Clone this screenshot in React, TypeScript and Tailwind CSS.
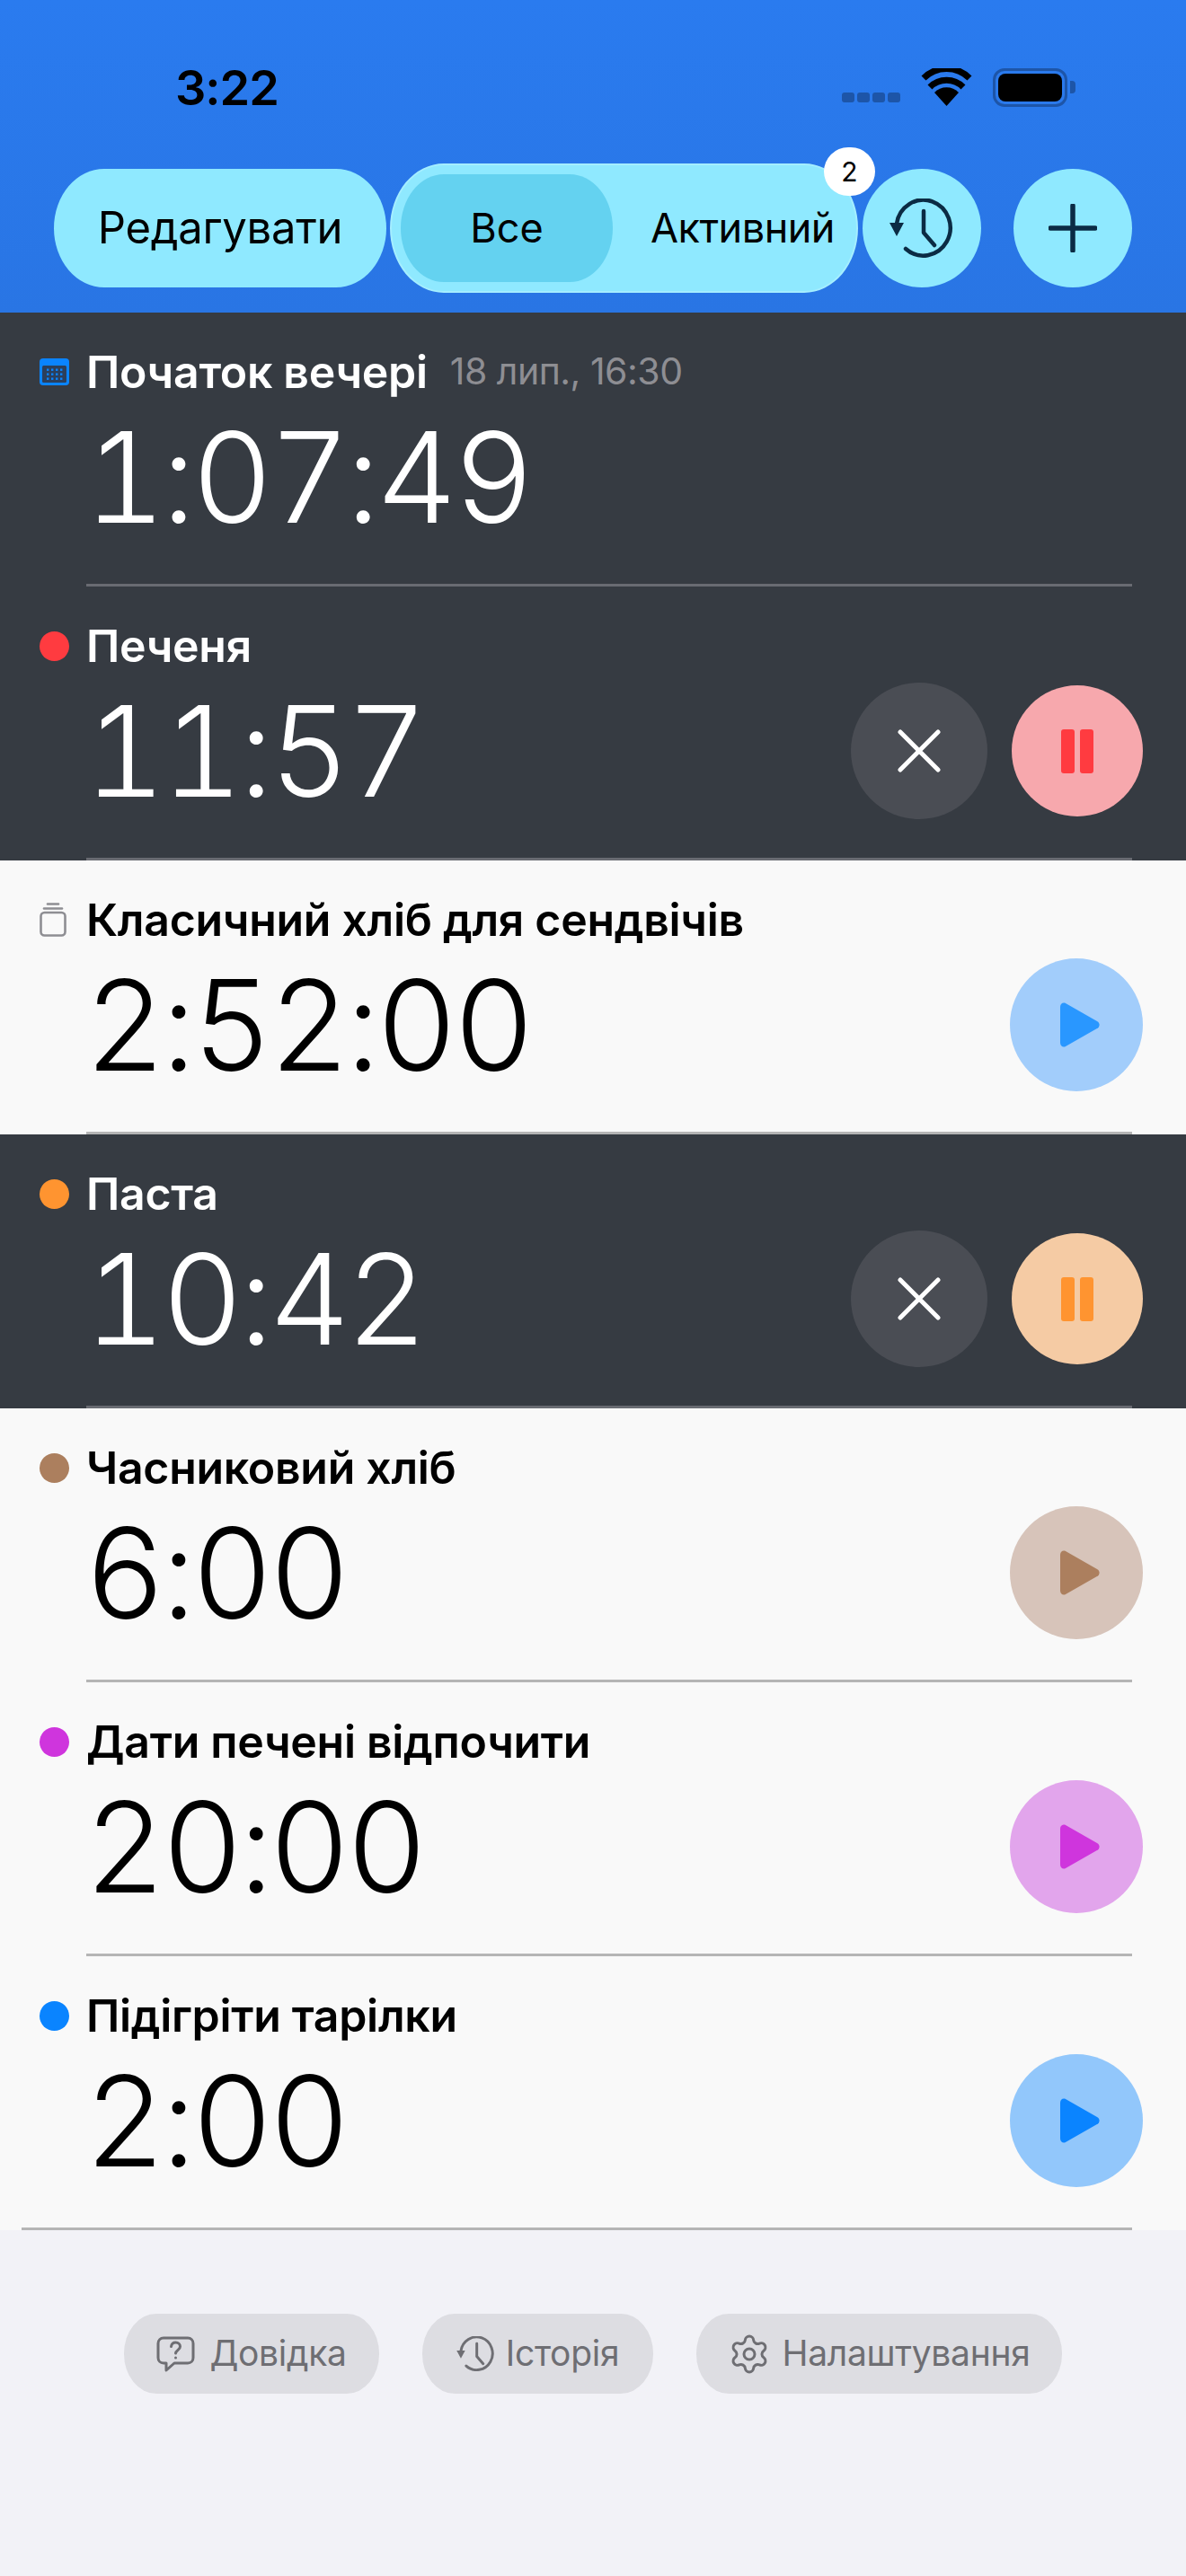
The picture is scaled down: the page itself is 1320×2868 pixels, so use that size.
import { Settings } from "lucide-react";

type Timer = {
  title: string;
  time: string;
  dark?: boolean;
  color?: string;
  tint?: string;
  marker?: "calendar" | "jar";
  date?: string;
  running?: boolean;
  last?: boolean;
};

const timers: Timer[] = [
  { title: "Початок вечері", time: "1:07:49", dark: true, marker: "calendar", date: "18 лип., 16:30" },
  { title: "Печеня", time: "11:57", dark: true, color: "#ff3b40", tint: "#f7a8ad", running: true },
  { title: "Класичний хліб для сендвічів", time: "2:52:00", marker: "jar", color: "#2997ff", tint: "#a2cdfb" },
  { title: "Паста", time: "10:42", dark: true, color: "#ff9430", tint: "#f5cba4", running: true },
  { title: "Часниковий хліб", time: "6:00", color: "#ac7f5e", tint: "#d7c4ba" },
  { title: "Дати печені відпочити", time: "20:00", color: "#cf35dd", tint: "#e2a5ec" },
  { title: "Підігріти тарілки", time: "2:00", color: "#0a84ff", tint: "#92c7fb", last: true },
];

const HistoryIcon = ({ className, strokeWidth }: { className: string; strokeWidth: number }) => (
  <svg viewBox="0 0 72 66" className={className} fill="none" stroke="currentColor" strokeWidth={strokeWidth} strokeLinecap="round" strokeLinejoin="round">
    <path d="M8 28A30 31 0 1 1 18 56" />
    <path d="M0 27H16L8 42Z" fill="currentColor" stroke="none" />
    <path d="M38 14V38L50 52" />
  </svg>
);

const CalendarIcon = () => (
  <svg viewBox="0 0 33 30" className="h-[30px] w-[33px]">
    <rect width="33" height="30" rx="4" fill="#0a84ff" />
    <rect x="3" y="8" width="27" height="19" rx="1.5" fill="#2b3f5c" />
    {[0, 1, 2].map((r) =>
      [0, 1, 2, 3].map((c) => <rect key={`${r}-${c}`} x={8 + c * 5} y={11.5 + r * 5} width="2.4" height="2.4" fill="#0a84ff" />)
    )}
  </svg>
);

const JarIcon = () => (
  <svg viewBox="0 0 30 38" className="h-[38px] w-[30px]" fill="none" stroke="#8e8e93" strokeWidth="2.6" strokeLinecap="round">
    <path d="M9 1.5H21" />
    <path d="M5 6.5H25" />
    <rect x="1.5" y="11" width="27" height="25.5" rx="4" />
  </svg>
);

const PlayIcon = ({ color }: { color: string }) => (
  <svg viewBox="0 0 44 50" className="ml-[7px] h-[50px] w-[44px]">
    <path d="M0 5C0 1.5 3 -.5 6 1L41 21C44.500 23 44.500 27 41 29L6 49C3 50.500 0 48.500 0 45Z" fill={color} />
  </svg>
);

const PauseIcon = ({ color }: { color: string }) => (
  <svg viewBox="0 0 36 49" className="h-[49px] w-[36px]">
    <rect width="15" height="49" rx="3" fill={color} />
    <rect x="21" width="15" height="49" rx="3" fill={color} />
  </svg>
);

const Row = ({ t }: { t: Timer }) => (
  <div className={`flex h-[305px] pl-[24px] ${t.dark ? "bg-[#363b42] text-white" : "bg-[#f9f9f9] text-black"}`}>
    <div className={`w-[72px] pl-[20px] ${t.last ? "border-b-[3px] border-[#b5b5b5]" : ""}`}>
      <div className="mt-[36px] flex h-[60px] items-center">
        {t.marker === "calendar" && <CalendarIcon />}
        {t.marker === "jar" && <JarIcon />}
        {!t.marker && <span className="h-[33px] w-[33px] rounded-full" style={{ backgroundColor: t.color }} />}
      </div>
    </div>
    <div className={`mr-[60px] flex flex-1 flex-col border-b-[3px] pt-[36px] ${t.dark ? "border-[#696b72]" : "border-[#b5b5b5]"}`}>
      <div className="flex h-[60px] items-center gap-[25px]">
        <span className="text-[50px] font-[560] tracking-[-0.3px]">{t.title}</span>
        {t.date && <span className="text-[41px] tracking-[-0.5px] text-[#8e8e93]">{t.date}</span>}
      </div>
      <div className="-mr-[12px] mt-[11px] flex h-[152px] items-center justify-between">
        <span className="-ml-[2px] text-[140px] leading-none font-light tabular-nums tracking-[-4.5px]">{t.time}</span>
        <div className="flex items-center gap-[27px]">
          {t.running && (
            <div className="flex h-[152px] w-[152px] items-center justify-center rounded-full bg-[#4a4d54]">
              <svg viewBox="0 0 48 48" className="h-[48px] w-[48px]" stroke="white" strokeWidth="5" strokeLinecap="round">
                <path d="M3 3L45 45M45 3L3 45" />
              </svg>
            </div>
          )}
          {t.tint && (
            <div
              className={`flex items-center justify-center rounded-full ${t.running ? "h-[146px] w-[146px]" : "h-[148px] w-[148px]"}`}
              style={{ backgroundColor: t.tint }}
            >
              {t.running ? <PauseIcon color={t.color!} /> : <PlayIcon color={t.color!} />}
            </div>
          )}
        </div>
      </div>
    </div>
  </div>
);

export default function App() {
  return (
    <div className="min-h-screen bg-[#f2f2f7] font-['Inter',sans-serif]">
      <header className="h-[348px] bg-gradient-to-b from-[#2a7bef] to-[#2975e4] pt-[66px]">
        {/* Status bar */}
        <div className="flex h-[62px] items-center pl-[195px]">
          <span className="text-[54px] font-semibold tracking-[-1px] text-black">3:22</span>
          <div className="ml-auto mr-[132px] flex items-center">
            <div className="mt-[22px] flex gap-[3px]">
              {[0, 1, 2, 3].map((i) => (
                <span key={i} className="h-[11px] w-[14px] rounded-[3px] bg-[#1d55a8]" />
              ))}
            </div>
            <svg viewBox="0 0 57 42" className="ml-[23px] h-[42px] w-[57px]">
              <path d="M28.500 42L15 27A19 19 0 0 1 42 27Z" />
              <path d="M10 21A26 26 0 0 1 47 21" fill="none" stroke="black" strokeWidth="7" />
              <path d="M3 11A36 36 0 0 1 54 11" fill="none" stroke="black" strokeWidth="7" />
            </svg>
            <div className="relative ml-[23px] flex h-[43px] w-[83px] items-center justify-center rounded-[13px] border-[3px] border-[#1d55a8]">
              <span className="h-[31px] w-[71px] rounded-[8px] bg-black" />
              <span className="absolute -right-[12px] h-[14px] w-[6px] rounded-r-[4px] bg-[#1d55a8]" />
            </div>
          </div>
        </div>

        {/* Toolbar */}
        <div className="mt-[54px] flex items-center pl-[60px] text-black">
          <div className="flex h-[132px] w-[370px] items-center justify-center rounded-[56px/66px] bg-[#8fe9ff] text-[49px] tracking-[-0.3px]">
            Редагувати
          </div>
          <div className="relative ml-[4px] flex h-[144px] w-[521px] items-center rounded-[60px/72px] border-2 border-[#a5eeff] bg-[#8fe9ff] pl-[10px]">
            <div className="flex h-[120px] w-[236px] items-center justify-center rounded-[48px/60px] bg-[#64d2f0] text-[45px]">
              Все
            </div>
            <span className="ml-[42px] text-[45px] tracking-[-0.5px]">Активний</span>
            <span className="absolute -top-[20px] left-[481px] flex h-[54px] w-[57px] items-center justify-center rounded-full bg-white text-[30px]">
              2
            </span>
          </div>
          <div className="ml-[5px] flex h-[132px] w-[132px] items-center justify-center rounded-full bg-[#8fe9ff] text-[#0b2b44]">
            <HistoryIcon className="h-[66px] w-[72px]" strokeWidth={4.5} />
          </div>
          <div className="ml-[36px] flex h-[132px] w-[132px] items-center justify-center rounded-full bg-[#8fe9ff]">
            <svg viewBox="0 0 54 54" className="h-[54px] w-[54px]" stroke="#0b2b44" strokeWidth="5.500" strokeLinecap="round">
              <path d="M27 2V52M2 27H52" />
            </svg>
          </div>
        </div>
      </header>

      <main>
        {timers.map((t) => (
          <Row key={t.title} t={t} />
        ))}
      </main>

      <footer className="flex justify-center gap-[48px] pt-[93px] text-[39px] tracking-[-0.3px] text-[#6e6e73]">
        <div className="flex h-[89px] w-[284px] items-center justify-center gap-[16px] rounded-[36px/44px] bg-[#dddde2]">
          <svg viewBox="0 0 43 40" className="h-[40px] w-[43px]" fill="none" stroke="currentColor" strokeWidth="3" strokeLinejoin="round" strokeLinecap="round">
            <path d="M8 2H35C38.500 2 41 4.500 41 8V24C41 27.500 38.500 30 35 30H20L11 38V30H8C4.500 30 2 27.500 2 24V8C2 4.500 4.500 2 8 2Z" />
            <path d="M16.500 11.500C17 8.500 19 7 21.500 7C24.500 7 26.500 9 26.500 11.500C26.500 15 22 15.500 21.500 19" />
            <path d="M21.500 24V24.100" />
          </svg>
          Довідка
        </div>
        <div className="flex h-[89px] w-[257px] items-center justify-center gap-[12px] rounded-[36px/44px] bg-[#dddde2]">
          <HistoryIcon className="h-[39px] w-[43px]" strokeWidth={5} />
          Історія
        </div>
        <div className="flex h-[89px] w-[407px] items-center justify-center gap-[12px] rounded-[36px/44px] bg-[#dddde2]">
          <Settings className="h-[48px] w-[48px]" strokeWidth={1.5} />
          Налаштування
        </div>
      </footer>
    </div>
  );
}
